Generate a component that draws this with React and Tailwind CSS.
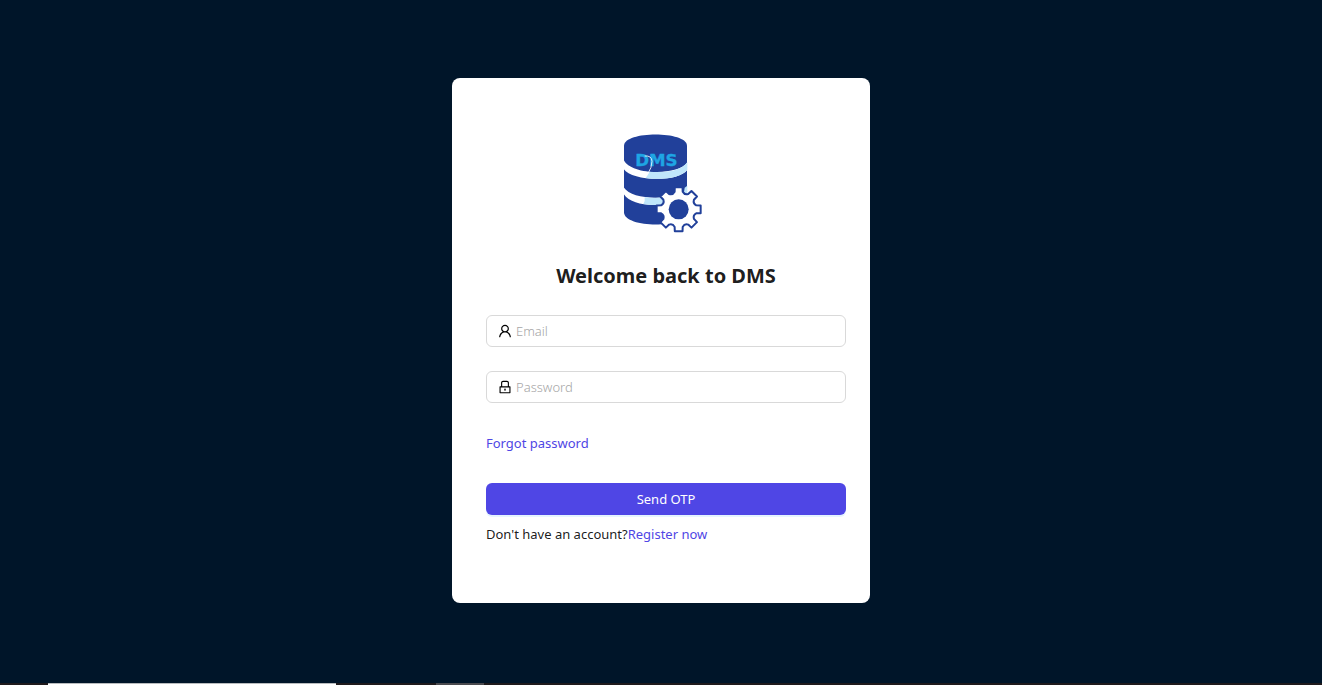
import { AiOutlineUser, AiOutlineLock } from "react-icons/ai";

const gearPoint = (radius, degrees) => {
  const a = (degrees * Math.PI) / 180;
  return `${(206 + radius * Math.cos(a)).toFixed(1)} ${(253 + radius * Math.sin(a)).toFixed(1)}`;
};

const gearPath =
  Array.from({ length: 8 }, (_, i) => {
    const c = i * 45;
    const start = i === 0 ? "M" : "L";
    return `${start}${gearPoint(54, c - 13)} L${gearPoint(67, c - 10)} L${gearPoint(67, c + 10)} L${gearPoint(54, c + 13)} Q${gearPoint(46, c + 22.5)} ${gearPoint(54, c + 32)}`;
  }).join(" ") + " Z";

function Logo() {
  return (
    <svg className="h-[115px] w-[105px]" viewBox="0 0 315 345" role="img" aria-label="DMS logo">
      <path d="M42 62C42 17 231 17 231 62V262C231 311 42 311 42 262Z" fill="#21409a" />
      <path d="M41 104C62 151 205 153 232 112V134C207 172 66 170 41 132Z" fill="#fff" />
      <path d="M118 140C160 144 212 140 232 112V134C213 159 155 166 107 159Q114 150 118 140Z" fill="#bfe6fb" />
      <path d="M41 187C59 214 110 222 170 217L158 238C110 244 60 235 41 207Z" fill="#fff" />
      <path d="M104 217Q132 221 160 217L158 238Q128 242 100 237Q106 227 104 217Z" fill="#bfe6fb" />
      <path d="M224 188L232 182V208L222 202Z" fill="#bfe6fb" />
      <text
        x="139"
        y="123"
        textAnchor="middle"
        fontFamily="'DejaVu Sans', sans-serif"
        fontWeight="700"
        fontSize="50"
        fill="#1ea5e4"
        stroke="#1ea5e4"
        strokeWidth="1"
      >
        DMS
      </text>
      <path d="M104 93Q125 91 126 109Q126 128 113 147" fill="none" stroke="#fff" strokeWidth="2.5" />
      <path d={gearPath} fill="#fff" stroke="#21409a" strokeWidth="6" strokeLinejoin="round" />
      <circle cx="206" cy="253" r="30" fill="#21409a" />
    </svg>
  );
}

function Field({ id, type, label, icon: Icon }) {
  return (
    <div className="flex h-8 items-center gap-[3px] rounded-md border border-[#d9d9d9] bg-white px-[10px]">
      <label htmlFor={id} aria-label={label} className="shrink-0">
        <Icon className="size-4 text-black" />
      </label>
      <input
        id={id}
        type={type}
        placeholder={label}
        className="min-w-0 flex-1 bg-transparent outline-none placeholder:font-light placeholder:text-[#a6a6a6]"
      />
    </div>
  );
}

export default function App() {
  return (
    <div className="flex min-h-screen flex-col bg-[#001529] font-['Noto_Sans','Open_Sans',sans-serif] text-[13px] leading-[22px] text-black/90">
      <main className="flex flex-1 items-center justify-center pb-0.5">
        <form
          className="flex w-full max-w-[418px] flex-col rounded-lg bg-white pt-[47px] pr-6 pb-[58px] pl-[34px]"
          onSubmit={(e) => e.preventDefault()}
        >
          <div className="flex justify-center pr-2">
            <Logo />
          </div>
          <h1 className="mt-5 text-center text-xl leading-8 font-bold">Welcome back to DMS</h1>
          <div className="mt-[23px] flex flex-col gap-6">
            <Field id="email" type="email" label="Email" icon={AiOutlineUser} />
            <Field id="password" type="password" label="Password" icon={AiOutlineLock} />
          </div>
          <a href="#forgot" className="mt-[29px] self-start text-[#4f46e5]">
            Forgot password
          </a>
          <button
            type="submit"
            className="mt-[29px] h-8 rounded-md bg-[#4f46e5] text-white shadow-[0_2px_0_rgba(5,145,255,0.1)]"
          >
            Send OTP
          </button>
          <p className="mt-2">
            Don't have an account?
            <a href="#register" className="text-[#4f46e5]">
              Register now
            </a>
          </p>
        </form>
      </main>
      <footer className="flex h-[2px] bg-[#1f1a1c] pl-12">
        <div className="w-72 border-t border-[#b9bcbe] bg-white" />
        <div className="ml-[100px] w-12 bg-[#4a4a4e]" />
      </footer>
    </div>
  );
}
